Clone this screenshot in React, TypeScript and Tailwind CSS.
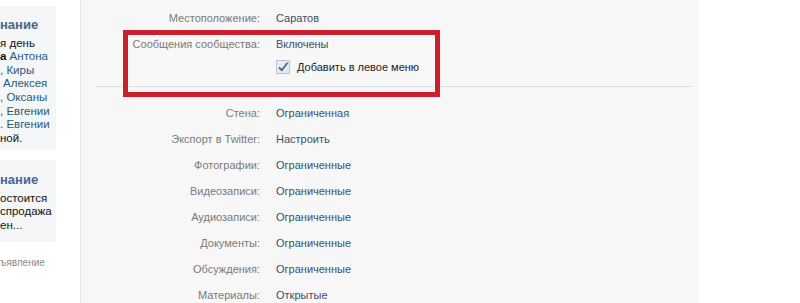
import React from "react";

const rows: { label: string; value: string }[] = [
  { label: "Стена:", value: "Ограниченная" },
  { label: "Экспорт в Twitter:", value: "Настроить" },
  { label: "Фотографии:", value: "Ограниченные" },
  { label: "Видеозаписи:", value: "Ограниченные" },
  { label: "Аудиозаписи:", value: "Ограниченные" },
  { label: "Документы:", value: "Ограниченные" },
  { label: "Обсуждения:", value: "Ограниченные" },
  { label: "Материалы:", value: "Открытые" },
];

function Row({ label, children }: { label: string; children: React.ReactNode }) {
  return (
    <div className="flex h-[26px] items-center">
      <div className="w-[179px] shrink-0 text-right text-[#7a7a7a]">{label}</div>
      <div className="pl-[16px] text-[#3c5068]">{children}</div>
    </div>
  );
}

export default function App() {
  return (
    <div
      className="flex h-[303px] w-[800px] overflow-hidden bg-white text-[11px]"
      style={{ fontFamily: '"Liberation Sans", Arial, sans-serif' }}
    >
      {/* left column, cut off */}
      <div className="flex w-[56px] shrink-0 flex-col pt-[6px] text-[11.5px] leading-[13.6px]">
        <div className="h-[144px] overflow-hidden whitespace-nowrap bg-[#f5f6f8] pt-[12px]">
          <div className="mb-[5px] text-[13px] font-bold text-[#45688e]">нание</div>
          <div className="text-[#111]">я день</div>
          <div>
            <span className="font-bold text-[#111]">а</span>{" "}
            <span className="text-[#2b587a]">Антона</span>
          </div>
          <div className="text-[#2b587a]">, Киры</div>
          <div className="pl-[3px] text-[#2b587a]">Алексея</div>
          <div className="text-[#2b587a]">, Оксаны</div>
          <div className="text-[#2b587a]">, Евгении</div>
          <div className="text-[#2b587a]">. Евгении</div>
          <div className="text-[#111]">ной.</div>
        </div>
        <div className="mt-[10px] h-[82px] overflow-hidden whitespace-nowrap bg-[#f5f6f8] pt-[13px]">
          <div className="mb-[5px] text-[13px] font-bold text-[#45688e]">нание</div>
          <div className="text-[#111]">остоится</div>
          <div className="text-[#111]">спродажа</div>
          <div className="text-[#111]">ен...</div>
        </div>
        <div className="mt-[14px] whitespace-nowrap text-[10px] text-[#888]">ъявление</div>
      </div>

      {/* main settings panel */}
      <div className="ml-[24px] w-[618px] shrink-0 border-l border-[#e4e4e4] bg-[#f7f7f7] shadow-[1px_0_2px_rgba(0,0,0,0.04)]">
        <div className="relative pt-[5px]">
          <Row label="Местоположение:">Саратов</Row>
          <Row label="Сообщения сообщества:">Включены</Row>
          <div className="flex h-[20px] items-center pl-[195px]">
            <span className="flex h-[14px] w-[14px] items-center justify-center border border-[#b9c4cf] bg-[#e4eaf0]">
              <svg width="12" height="12" viewBox="0 0 12 12">
                <path d="M2 6.5 L4.8 9.2 L10.5 1.8" fill="none" stroke="#45688e" strokeWidth="1.8" />
              </svg>
            </span>
            <span className="ml-[7px] text-[#222]">Добавить в левое меню</span>
          </div>
          <div className="ml-[15px] mr-[6px] mt-[9px] h-px bg-[#dcdcdc]" />
          <div className="mt-[13px]">
            {rows.map((r) => (
              <Row key={r.label} label={r.label}>
                {r.value}
              </Row>
            ))}
          </div>

          {/* red annotation frame */}
          <div className="absolute left-[42px] top-[30px] h-[67px] w-[317px] border-[5px] border-[#cc1f2d]" />
        </div>
      </div>
    </div>
  );
}
